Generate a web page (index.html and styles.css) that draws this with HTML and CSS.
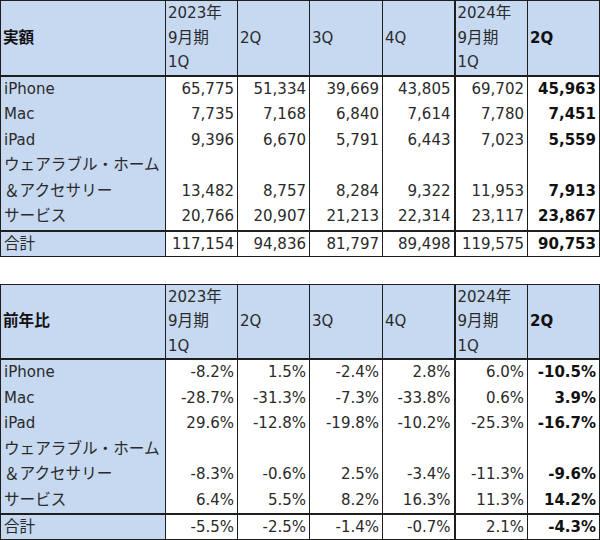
FILE: index.html
```html
<!DOCTYPE html>
<html lang="ja">
<head>
<meta charset="utf-8">
<link rel="stylesheet" href="styles.css">
</head>
<body>
<table class="tbl">
  <colgroup>
    <col class="c0"><col class="c1"><col class="c2"><col class="c3"><col class="c4"><col class="c5"><col class="c6">
  </colgroup>
  <thead>
    <tr class="head">
      <th class="label"><span class="ja">実額</span></th>
      <th>2023<span class="ja">年</span><br>9<span class="ja">月期</span><br>1Q</th>
      <th>2Q</th>
      <th>3Q</th>
      <th>4Q</th>
      <th class="split">2024<span class="ja">年</span><br>9<span class="ja">月期</span><br>1Q</th>
      <th class="bold">2Q</th>
    </tr>
  </thead>
  <tbody>
    <tr><td class="name">iPhone</td><td>65,775</td><td>51,334</td><td>39,669</td><td>43,805</td><td class="split">69,702</td><td class="bold">45,963</td></tr>
    <tr><td class="name">Mac</td><td>7,735</td><td>7,168</td><td>6,840</td><td>7,614</td><td class="split">7,780</td><td class="bold">7,451</td></tr>
    <tr><td class="name">iPad</td><td>9,396</td><td>6,670</td><td>5,791</td><td>6,443</td><td class="split">7,023</td><td class="bold">5,559</td></tr>
    <tr><td class="name"><span class="ja">ウェアラブル・ホーム</span></td><td></td><td></td><td></td><td></td><td class="split"></td><td class="bold"></td></tr>
    <tr><td class="name"><span class="ja">＆アクセサリー</span></td><td>13,482</td><td>8,757</td><td>8,284</td><td>9,322</td><td class="split">11,953</td><td class="bold">7,913</td></tr>
    <tr><td class="name"><span class="ja">サービス</span></td><td>20,766</td><td>20,907</td><td>21,213</td><td>22,314</td><td class="split">23,117</td><td class="bold">23,867</td></tr>
    <tr class="total"><td class="name"><span class="ja">合計</span></td><td>117,154</td><td>94,836</td><td>81,797</td><td>89,498</td><td class="split">119,575</td><td class="bold">90,753</td></tr>
  </tbody>
</table>

<table class="tbl second">
  <colgroup>
    <col class="c0"><col class="c1"><col class="c2"><col class="c3"><col class="c4"><col class="c5"><col class="c6">
  </colgroup>
  <thead>
    <tr class="head">
      <th class="label"><span class="ja">前年比</span></th>
      <th>2023<span class="ja">年</span><br>9<span class="ja">月期</span><br>1Q</th>
      <th>2Q</th>
      <th>3Q</th>
      <th>4Q</th>
      <th class="split">2024<span class="ja">年</span><br>9<span class="ja">月期</span><br>1Q</th>
      <th class="bold">2Q</th>
    </tr>
  </thead>
  <tbody>
    <tr><td class="name">iPhone</td><td>-8.2%</td><td>1.5%</td><td>-2.4%</td><td>2.8%</td><td class="split">6.0%</td><td class="bold">-10.5%</td></tr>
    <tr><td class="name">Mac</td><td>-28.7%</td><td>-31.3%</td><td>-7.3%</td><td>-33.8%</td><td class="split">0.6%</td><td class="bold">3.9%</td></tr>
    <tr><td class="name">iPad</td><td>29.6%</td><td>-12.8%</td><td>-19.8%</td><td>-10.2%</td><td class="split">-25.3%</td><td class="bold">-16.7%</td></tr>
    <tr><td class="name"><span class="ja">ウェアラブル・ホーム</span></td><td></td><td></td><td></td><td></td><td class="split"></td><td class="bold"></td></tr>
    <tr><td class="name"><span class="ja">＆アクセサリー</span></td><td>-8.3%</td><td>-0.6%</td><td>2.5%</td><td>-3.4%</td><td class="split">-11.3%</td><td class="bold">-9.6%</td></tr>
    <tr><td class="name"><span class="ja">サービス</span></td><td>6.4%</td><td>5.5%</td><td>8.2%</td><td>16.3%</td><td class="split">11.3%</td><td class="bold">14.2%</td></tr>
    <tr class="total"><td class="name"><span class="ja">合計</span></td><td>-5.5%</td><td>-2.5%</td><td>-1.4%</td><td>-0.7%</td><td class="split">2.1%</td><td class="bold">-4.3%</td></tr>
  </tbody>
</table>
</body>
</html>
```
FILE: styles.css
```css
html, body {
  margin: 0;
  padding: 0;
  background: #ffffff;
}

body {
  font-family: "DejaVu Sans", "Noto Sans CJK JP", sans-serif;
  font-size: 15px;
  color: #2a2a2a;
}

.ja {
  font-family: "Noto Sans CJK JP", sans-serif;
  font-size: 15.6px;
  line-height: 1;
}

.tbl {
  border-collapse: collapse;
  table-layout: fixed;
  width: 599px;
  border: 1px solid #1e1e1e;
}

.second {
  margin-top: 27px;
}

.c0 { width: 165px; }
.c1 { width: 72px; }
.c2 { width: 72px; }
.c3 { width: 73px; }
.c4 { width: 72px; }
.c5 { width: 73px; }
.c6 { width: 72px; }

.tbl th,
.tbl td {
  padding: 0 3px 0 3px;
  border-left: 1px solid #1e1e1e;
  border-right: 1px solid #1e1e1e;
  white-space: nowrap;
  overflow: hidden;
}

.head th {
  background: #c6d9f1;
  font-weight: normal;
  text-align: left;
  vertical-align: middle;
  border-bottom: 2px solid #1e1e1e;
  padding-left: 2px;
  line-height: 24.5px;
  height: 73.5px;
}

.head th.label,
.head th.bold {
  font-weight: bold;
  color: #111;
}

.tbl td {
  text-align: right;
  background: #ffffff;
  line-height: 25.5px;
  height: 25.5px;
}

.tbl td.name {
  text-align: left;
  background: #c6d9f1;
}

.tbl .split {
  border-left: 2px solid #1e1e1e;
}

.tbl td.bold {
  font-weight: bold;
  color: #111;
}

.total td {
  border-top: 2px solid #1e1e1e;
  line-height: 24px;
  height: 24px;
}
```
